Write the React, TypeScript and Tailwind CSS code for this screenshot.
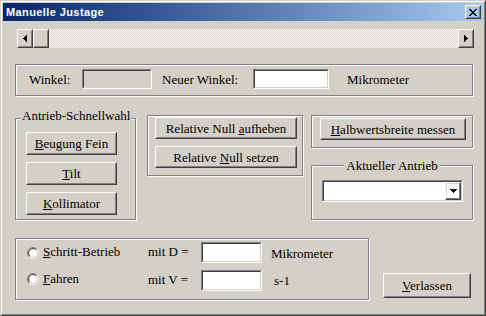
import React from "react";

const LEFT = ["...X", "..XX", ".XXX", "XXXX", ".XXX", "..XX", "...X"];
const RIGHT = ["X...", "XX..", "XXX.", "XXXX", "XXX.", "XX..", "X..."];
const DOWN = ["XXXXXXX", ".XXXXX.", "..XXX..", "...X..."];
const CLOSE = [
  "XX....XX",
  ".XX..XX.",
  "..XXXX..",
  "...XX...",
  "..XXXX..",
  ".XX..XX.",
  "XX....XX",
];

function Pix({ rows }: { rows: string[] }) {
  const w = rows[0].length;
  const h = rows.length;
  return (
    <svg width={w} height={h} viewBox={`0 0 ${w} ${h}`} shapeRendering="crispEdges" className="block">
      {rows.flatMap((r, y) =>
        r.split("").map((c, x) =>
          c === "X" ? <rect key={`${x}-${y}`} x={x} y={y} width={1} height={1} fill="#000" /> : null
        )
      )}
    </svg>
  );
}

function Raised({
  className = "",
  children,
}: {
  className?: string;
  children?: React.ReactNode;
}) {
  return (
    <div className={`border border-t-white border-l-white border-r-[#404040] border-b-[#404040] ${className}`}>
      <div className="h-full border border-t-[#d4d0c8] border-l-[#d4d0c8] border-r-[#808080] border-b-[#808080] flex items-center justify-center">
        {children}
      </div>
    </div>
  );
}

function Sunken({
  className = "",
  white = true,
  children,
}: {
  className?: string;
  white?: boolean;
  children?: React.ReactNode;
}) {
  return (
    <div className={`border border-t-[#808080] border-l-[#808080] border-r-white border-b-white ${className}`}>
      <div
        className={`h-full border border-t-[#404040] border-l-[#404040] border-r-[#d4d0c8] border-b-[#d4d0c8] flex justify-end ${
          white ? "bg-white" : "bg-[#d4d0c8]"
        }`}
      >
        {children}
      </div>
    </div>
  );
}

function Group({
  className = "",
  children,
}: {
  className?: string;
  children?: React.ReactNode;
}) {
  return (
    <div className={`relative border border-[#808080] shadow-[inset_1px_1px_0_#ffffff,1px_1px_0_#ffffff] ${className}`}>
      {children}
    </div>
  );
}

function Radio() {
  const a = 3.889;
  const b = 3.182;
  return (
    <svg width="12" height="12" viewBox="0 0 12 12" className="block">
      <circle cx="6" cy="6" r="4.2" fill="#ffffff" />
      <path d={`M ${6 - a} ${6 + a} A 5.5 5.5 0 0 1 ${6 + a} ${6 - a}`} fill="none" stroke="#808080" strokeWidth="1" />
      <path d={`M ${6 + a} ${6 - a} A 5.5 5.5 0 0 1 ${6 - a} ${6 + a}`} fill="none" stroke="#ffffff" strokeWidth="1" />
      <path d={`M ${6 - b} ${6 + b} A 4.5 4.5 0 0 1 ${6 + b} ${6 - b}`} fill="none" stroke="#404040" strokeWidth="1" />
      <path d={`M ${6 + b} ${6 - b} A 4.5 4.5 0 0 1 ${6 - b} ${6 + b}`} fill="none" stroke="#d4d0c8" strokeWidth="1" />
    </svg>
  );
}

export default function App() {
  return (
    <div className="font-serif">
      <div className="w-[486px] h-[316px] bg-[#d4d0c8] border border-t-[#d4d0c8] border-l-[#d4d0c8] border-r-[#404040] border-b-[#404040] font-[Liberation_Serif,Times_New_Roman,serif] text-[13px] leading-[15px] text-black">
        <div className="h-full border border-t-white border-l-white border-r-[#808080] border-b-[#808080] p-px flex flex-col">
          {/* Title bar */}
          <div className="h-[18px] shrink-0 flex items-center justify-between bg-linear-to-r from-[#0a246a] to-[#a6caf0] pl-[3px] pr-[2px]">
            <span className="font-sans">
              <span className="font-[Liberation_Sans,Arial,sans-serif] font-bold text-[11px] leading-[18px] tracking-[0.4px] text-white">
                Manuelle Justage
              </span>
            </span>
            <Raised className="w-[16px] h-[14px]">
              <Pix rows={CLOSE} />
            </Raised>
          </div>

          {/* Client */}
          <div className="flex flex-col">
            {/* Scrollbar */}
            <div className="mt-[8px] ml-[14px] w-[457px] h-[19px] flex">
              <Raised className="w-[16px] h-full">
                <Pix rows={LEFT} />
              </Raised>
              <Raised className="w-[16px] h-full" />
              <div className="flex-1 [background-image:repeating-conic-gradient(#ffffff_0%_25%,#d4d0c8_0%_50%)] [background-size:2px_2px]" />
              <Raised className="w-[16px] h-full">
                <Pix rows={RIGHT} />
              </Raised>
            </div>

            {/* Winkel group */}
            <Group className="mt-[16px] ml-[12px] w-[458px] h-[32px]">
              <div className="flex items-start pt-[4px] pl-[13px]">
                <span className="w-[53px] h-[20px] flex items-center">Winkel:</span>
                <Sunken white={false} className="w-[70px] h-[20px]" />
                <span className="ml-[10px] w-[91px] h-[20px] flex items-center">Neuer Winkel:</span>
                <Sunken className="w-[76px] h-[20px]" />
                <span className="ml-[18px] h-[20px] flex items-center">Mikrometer</span>
              </div>
            </Group>

            {/* Middle row */}
            <div className="mt-[19px] ml-[12px] flex items-start">
              <Group className="mt-[3px] w-[121px] h-[102px]">
                <span className="absolute left-[5px] -top-[11px] px-px bg-[#d4d0c8] whitespace-nowrap">
                  Antrieb-Schnellwahl
                </span>
                <div className="flex flex-col pt-[13px] pl-[10px] gap-[7px]">
                  <Raised className="w-[91px] h-[23px]">
                    <span>
                      <u>B</u>eugung Fein
                    </span>
                  </Raised>
                  <Raised className="w-[91px] h-[23px]">
                    <span>
                      <u>T</u>ilt
                    </span>
                  </Raised>
                  <Raised className="w-[91px] h-[23px]">
                    <span>
                      <u>K</u>ollimator
                    </span>
                  </Raised>
                </div>
              </Group>

              <Group className="ml-[11px] w-[156px] h-[61px]">
                <div className="flex flex-col pt-[1px] pl-[7px] gap-[7px]">
                  <Raised className="w-[142px] h-[22px]">
                    <span>
                      Relative Null <u>a</u>ufheben
                    </span>
                  </Raised>
                  <Raised className="w-[142px] h-[22px]">
                    <span>
                      Relative <u>N</u>ull setzen
                    </span>
                  </Raised>
                </div>
              </Group>

              <div className="ml-[8px] w-[162px] flex flex-col">
                <Group className="h-[33px]">
                  <div className="pt-[2px] pl-[8px]">
                    <Raised className="w-[146px] h-[22px]">
                      <span>
                        <u>H</u>albwertsbreite messen
                      </span>
                    </Raised>
                  </div>
                </Group>
                <Group className="mt-[17px] h-[55px]">
                  <div className="absolute inset-x-0 -top-[8px] flex justify-center">
                    <span className="px-[2px] bg-[#d4d0c8] whitespace-nowrap">Aktueller Antrieb</span>
                  </div>
                  <div className="pt-[14px] pl-[10px]">
                    <Sunken className="w-[141px] h-[22px]">
                      <Raised className="w-[16px] h-full">
                        <Pix rows={DOWN} />
                      </Raised>
                    </Sunken>
                  </div>
                </Group>
              </div>
            </div>

            {/* Bottom row */}
            <div className="mt-[18px] ml-[12px] flex items-start">
              <Group className="w-[354px] h-[62px]">
                <div className="flex flex-col pt-[3px] pl-[11px] gap-[7px]">
                  <div className="h-[21px] flex items-start">
                    <div className="w-[16px] mt-[5px]">
                      <Radio />
                    </div>
                    <span className="w-[105px] mt-[2px]">
                      <u>S</u>chritt-Betrieb
                    </span>
                    <span className="w-[53px] mt-[2px]">mit D =</span>
                    <Sunken className="w-[61px] h-[21px]" />
                    <span className="ml-[9px] mt-[4px]">Mikrometer</span>
                  </div>
                  <div className="h-[21px] flex items-start">
                    <div className="w-[16px] mt-[3px]">
                      <Radio />
                    </div>
                    <span className="w-[105px] mt-[1px]">
                      <u>F</u>ahren
                    </span>
                    <span className="w-[53px] mt-[2px]">mit V =</span>
                    <Sunken className="w-[61px] h-[21px]" />
                    <span className="ml-[12px] mt-[3px]">s-1</span>
                  </div>
                </div>
              </Group>
              <Raised className="ml-[14px] mt-[35px] w-[88px] h-[25px]">
                <span>
                  <u>V</u>erlassen
                </span>
              </Raised>
            </div>
          </div>
        </div>
      </div>
    </div>
  );
}
